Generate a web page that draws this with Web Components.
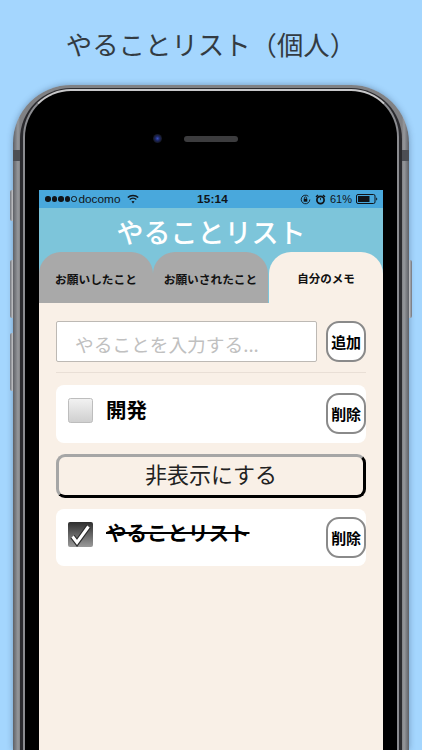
<!DOCTYPE html>
<html lang="ja">
<head>
<meta charset="utf-8">
<title>やることリスト</title>
<style>
  html, body { margin: 0; height: 750px; overflow: hidden; }
  body { background: #a4d6fe; font-family: "Noto Sans CJK JP", "Noto Sans", sans-serif; }
</style>
</head>
<body>
<shot-title>やることリスト（個人）</shot-title>
<phone-frame>
  <status-bar></status-bar>
  <app-header>やることリスト</app-header>
  <tab-bar>
    <tab-item>お願いしたこと</tab-item>
    <tab-item>お願いされたこと</tab-item>
    <tab-item active>自分のメモ</tab-item>
  </tab-bar>
  <memo-list>
    <memo-input></memo-input>
    <todo-row>開発</todo-row>
    <hide-button>非表示にする</hide-button>
    <todo-row done>やることリスト</todo-row>
  </memo-list>
</phone-frame>

<script>
// small helper, every element below just has a style + markup string
function shadow(el, css, html) {
    const root = el.attachShadow({ mode: 'open' });
    root.innerHTML = `<style>${css}</style>${html}`;
    return root;
}

class ShotTitle extends HTMLElement {
    constructor() {
        super();
        shadow(this, `
            :host { display: block; height: 85px; box-sizing: border-box; padding-top: 25px;
                    text-align: center; font-size: 26.4px; line-height: 38px; color: #333b42; white-space: nowrap; }
        `, `<slot></slot>`);
    }
}

class PhoneFrame extends HTMLElement {
    constructor() {
        super();
        shadow(this, `
            :host { display: block; position: relative; margin: 0 13px; height: 665px; }
            .shell { height: 100%; box-sizing: border-box; padding: 3px 7px 0;
                     border-radius: 58px 58px 0 0;
                     background: linear-gradient(90deg, #5e6066 0, #96989c 5px, #808184 7px, #808184 389px, #96989c 391px, #5e6066 396px);
                     box-shadow: 0 0 6px rgba(40, 60, 90, .4); }
            .rim { height: 100%; box-sizing: border-box; padding: 1px 3px 0;
                   border-radius: 51px 51px 0 0; background: #2a2a2e; }
            .line { height: 100%; box-sizing: border-box; border: 2px solid #8b8c90; border-top-color: #c8c8ca; border-bottom: 0;
                    border-radius: 48px 48px 0 0; background: #000; padding: 0 14px;
                    display: flex; flex-direction: column; }
            .sensors { height: 99px; flex: none; display: flex; align-items: center; justify-content: center;
                       gap: 22px; box-sizing: border-box; padding: 0 32px 4px 0; }
            .camera { width: 9px; height: 9px; border-radius: 50%;
                      background: radial-gradient(circle, #3a4fc0 0, #1c2660 35%, #14161e 70%); }
            .speaker { width: 54px; height: 6px; border-radius: 3px; background: #3c3c3e; }
            .screen { flex: 1; min-height: 0; display: flex; flex-direction: column; overflow: hidden; background: #f9f0e7; }
            .key { position: absolute; width: 3px; background: linear-gradient(90deg, #70747c, #c8c8ca); }
            .key.l { left: -3px; border-radius: 2px 0 0 2px; }
            .key.r { right: -3px; transform: scaleX(-1); border-radius: 2px 0 0 2px; }
            .band { position: absolute; top: 65px; width: 7px; height: 11px; background: #4c4e54; }
        `, `
            <div class="shell"><div class="rim"><div class="line">
                <div class="sensors"><span class="camera"></span><span class="speaker"></span></div>
                <div class="screen"><slot></slot></div>
            </div></div></div>
            <i class="band" style="left:0"></i><i class="band" style="right:0"></i>
            <i class="key l" style="top:105px;height:31px"></i>
            <i class="key l" style="top:175px;height:58px"></i>
            <i class="key l" style="top:248px;height:58px"></i>
            <i class="key r" style="top:175px;height:58px"></i>
        `);
    }
}

class StatusBar extends HTMLElement {
    constructor() {
        super();
        shadow(this, `
            :host { display: grid; grid-template-columns: 1fr auto 1fr; align-items: center; flex: none;
                    height: 18px; padding: 0 5px 0 6px; background: #49a8dc; color: #101418;
                    font: 11.8px/18px "Liberation Sans", Arial, sans-serif; }
            .left, .right { display: flex; align-items: center; }
            .right { justify-content: flex-end; }
            .dots { display: flex; gap: 1px; margin-right: 2px; }
            .dots i { width: 5.5px; height: 5.5px; border-radius: 50%; background: #101418; box-sizing: border-box; }
            .dots i.off { background: none; border: 1px solid #101418; }
            b { font-weight: 700; letter-spacing: .2px; padding-left: 2px; }
            svg { display: block; }
        `, `
            <div class="left">
                <span class="dots"><i></i><i></i><i></i><i></i><i class="off"></i></span>
                <span>docomo</span>
                <svg style="margin-left:7px" width="12" height="10" viewBox="0 0 12 10" fill="none" stroke="#101418" stroke-width="1.4">
                    <path d="M.8 3.6a7.4 7.4 0 0 1 10.4 0"/><path d="M2.7 5.6a4.7 4.7 0 0 1 6.6 0"/>
                    <path d="M6 9.4 4.5 7.6a2.2 2.2 0 0 1 3 0z" fill="#101418" stroke="none"/>
                </svg>
            </div>
            <b>15:14</b>
            <div class="right">
                <svg width="11" height="11" viewBox="0 0 11 11" fill="none" stroke="#101418">
                    <path d="M9.8 5.5A4.3 4.3 0 1 1 8.4 2.3" stroke-width=".9"/>
                    <rect x="3.7" y="4.8" width="3.6" height="2.9" fill="#101418" stroke="none"/>
                    <path d="M4.4 4.9V4a1.1 1.1 0 0 1 2.2 0v.9" stroke-width=".8"/>
                </svg>
                <svg style="margin-left:4px" width="11" height="11" viewBox="0 0 11 11" fill="none" stroke="#101418">
                    <circle cx="5.5" cy="6" r="3.6" stroke-width="1.7"/>
                    <path d="M5.5 4v2.2" stroke-width=".8"/>
                    <path d="M1 3 3 1M10 3 8 1" stroke-width="1.4"/>
                </svg>
                <span style="margin-left:4px;font-size:11px">61%</span>
                <svg style="margin-left:4px" width="22" height="10" viewBox="0 0 22 10">
                    <rect x=".5" y=".5" width="18.5" height="9" rx="1.5" fill="none" stroke="#101418"/>
                    <rect x="2" y="2" width="11.5" height="6" fill="#101418"/>
                    <path d="M20.2 3.5a1.6 1.6 0 0 1 0 3z" fill="#101418"/>
                </svg>
            </div>
        `);
    }
}

class AppHeader extends HTMLElement {
    constructor() {
        super();
        shadow(this, `
            :host { display: block; flex: none; height: 44px; background: #7dc5da; color: #fff;
                    text-align: center; font-size: 27px; font-weight: 500; line-height: 48px; }
        `, `<slot></slot>`);
    }
}

class TabBar extends HTMLElement {
    constructor() {
        super();
        shadow(this, `
            :host { display: grid; grid-template-columns: 114px 115px 115px; flex: none; height: 51px; background: #7dc5da; }
        `, `<slot></slot>`);
    }
}

class TabItem extends HTMLElement {
    constructor() {
        super();
        shadow(this, `
            :host { display: flex; align-items: center; justify-content: center; box-sizing: border-box;
                    padding-top: 1px; border-radius: 22px 22px 0 0; background: #a9a9a9; color: #111;
                    font-size: 11.7px; font-weight: 700; white-space: nowrap; }
            :host([active]) { background: #f9f0e7; margin-left: 1px; font-size: 11.5px; }
        `, `<slot></slot>`);
    }
}

class MemoList extends HTMLElement {
    constructor() {
        super();
        shadow(this, `
            :host { display: flex; flex-direction: column; gap: 11px; flex: 1; padding: 18px 17px 0; background: #f9f0e7; }
        `, `<slot></slot>`);
    }
}

class RoundButton extends HTMLElement {
    constructor() {
        super();
        shadow(this, `
            :host { display: flex; align-items: center; justify-content: center; flex: none; box-sizing: border-box;
                    width: 40px; height: 41px; border: 2px solid #8a8a8a; border-radius: 13px; background: #fff;
                    color: #000; font-size: 15px; font-weight: 700; white-space: nowrap; letter-spacing: -.2px; }
        `, `<slot></slot>`);
    }
}

class MemoInput extends HTMLElement {
    constructor() {
        super();
        shadow(this, `
            :host { display: block; padding-bottom: 10px; margin-bottom: 1px; border-bottom: 1px solid #e9dfd6; }
            .row { display: flex; justify-content: space-between; }
            .field { display: flex; align-items: center; box-sizing: border-box; width: 261px; height: 41px; padding: 3px 0 0 18px;
                     border: 1px solid #bdb9b4; border-radius: 2px; background: #fff; color: #c0c0c0; font-size: 18.7px; white-space: nowrap; }
        `, `
            <div class="row">
                <div class="field">やることを入力する...</div>
                <round-button>追加</round-button>
            </div>
        `);
    }
}

class TodoRow extends HTMLElement {
    constructor() {
        super();
        const done = this.hasAttribute('done');
        shadow(this, `
            :host { display: flex; align-items: center; box-sizing: border-box; height: 57.5px; padding-left: 12px;
                    border-radius: 8px; background: #fff; }
            .box { flex: none; display: block; margin-top: -6px; }
            .text { flex: 1; margin: -10px 0 0 13px; color: #000; font-size: 20.5px; font-weight: 700; white-space: nowrap; line-height: 30px; }
            .text.done { text-decoration: line-through; text-decoration-thickness: 2px; }
        `, `
            ${done ? `
            <svg class="box" width="25" height="25" viewBox="0 0 25 25">
                <defs><linearGradient id="g" x1="0" y1="0" x2="0" y2="1"><stop offset="0" stop-color="#2e2e2e"/><stop offset="1" stop-color="#9a9a9a"/></linearGradient></defs>
                <rect width="25" height="25" rx="2" fill="url(#g)"/>
                <path d="M4.5 14.5 9 20.5 20.5 4.5" fill="none" stroke="#2a2a2a" stroke-width="5.4"/>
                <path d="M4.5 14.5 9 20.5 20.5 4.5" fill="none" stroke="#fff" stroke-width="3"/>
            </svg>` : `
            <svg class="box" width="25" height="25" viewBox="0 0 25 25">
                <defs><linearGradient id="g" x1="0" y1="0" x2="0" y2="1"><stop offset="0" stop-color="#f2f2f2"/><stop offset="1" stop-color="#cfcfcf"/></linearGradient></defs>
                <rect x=".5" y=".5" width="24" height="24" rx="2" fill="url(#g)" stroke="#bdbdbd"/>
            </svg>`}
            <span class="text ${done ? 'done' : ''}"><slot></slot></span>
            <round-button>削除</round-button>
        `);
    }
}

class HideButton extends HTMLElement {
    constructor() {
        super();
        shadow(this, `
            :host { display: flex; align-items: center; justify-content: center; box-sizing: border-box; height: 44px;
                    padding-bottom: 5px; border: 3px solid; border-color: #a6a6a6 #000 #000 #a6a6a6; border-radius: 9px;
                    background: #f9f0e7; color: #222; font-size: 22px; }
        `, `<slot></slot>`);
    }
}

customElements.define('shot-title', ShotTitle);
customElements.define('phone-frame', PhoneFrame);
customElements.define('status-bar', StatusBar);
customElements.define('app-header', AppHeader);
customElements.define('tab-bar', TabBar);
customElements.define('tab-item', TabItem);
customElements.define('memo-list', MemoList);
customElements.define('round-button', RoundButton);
customElements.define('memo-input', MemoInput);
customElements.define('todo-row', TodoRow);
customElements.define('hide-button', HideButton);
</script>
</body>
</html>
